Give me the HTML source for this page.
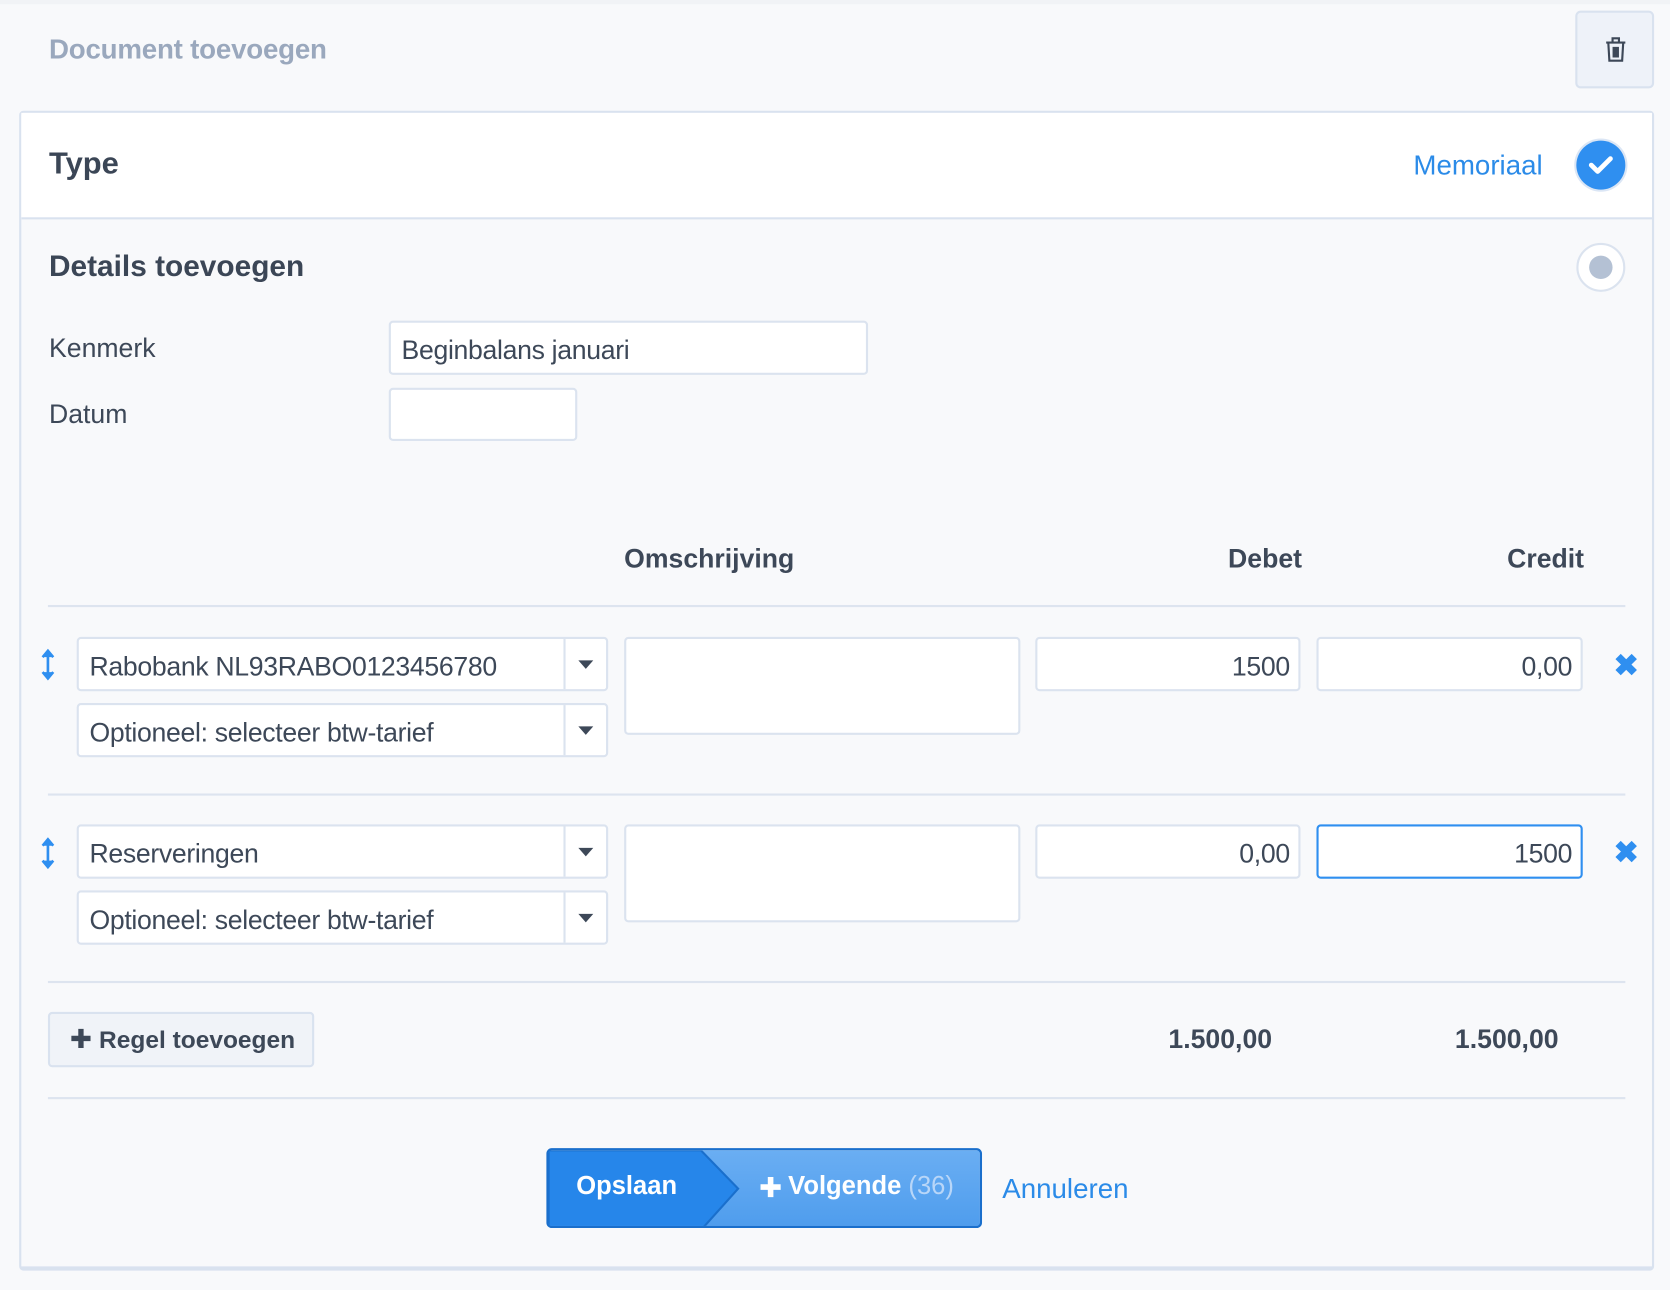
<!DOCTYPE html>
<html><head><meta charset="utf-8"><style>
html,body{margin:0;padding:0;width:1670px;height:1290px;overflow:hidden;background:#f8f9fb;}
#w{position:absolute;left:0;top:0;width:1568px;height:1211px;transform:scale(1.0651);transform-origin:0 0;font-family:"Liberation Sans",Arial,sans-serif;color:#3d4858;}
.a{position:absolute;}
.t{position:absolute;white-space:nowrap;line-height:1;}
.inp{position:absolute;background:#fff;border:2px solid #dbe3ef;border-radius:4px;box-sizing:border-box;}
.sel .dd{position:absolute;right:0;top:0;bottom:0;width:38px;border-left:2px solid #dbe3ef;}
.sel .dd:after{content:"";position:absolute;left:12px;top:20px;border-left:7px solid transparent;border-right:7px solid transparent;border-top:8px solid #3d4858;}
.sel span,.num span{position:absolute;top:12px;font-size:25px;letter-spacing:-0.3px;white-space:nowrap;}
.sel span{left:10px;}
.num span{right:8px;}
.hl{position:absolute;left:45px;width:1481px;height:2px;background:#dde4ef;}
</style></head><body><div id="w">
<div class="a" style="left:0;top:0;width:1568px;height:4px;background:#f1f3f6"></div>
<div class="t" style="left:46px;top:33px;font-size:26px;font-weight:bold;color:#9aa8bd;letter-spacing:-0.2px">Document toevoegen</div>
<div class="a" style="left:1479px;top:10px;width:74px;height:73px;box-sizing:border-box;background:#eef2f9;border:2px solid #d9e2ef;border-radius:5px">
<svg class="a" style="left:25px;top:22px" width="22" height="26" viewBox="0 0 22 26"><path d="M2 6h18M8 6V2h6v4M4 6l1 17h12l1-17M9 10v10M11 10v10M13 10v10" fill="none" stroke="#3d4858" stroke-width="2"/></svg></div>

<div class="a" style="left:18px;top:104px;width:1535px;height:1089px;box-sizing:border-box;border:2px solid #d9e2ef;border-bottom-width:4px;border-radius:4px;background:#f8f9fb"></div>
<div class="a" style="left:20px;top:106px;width:1531px;height:98px;background:#fff;border-bottom:2px solid #d9e2ef"></div>
<div class="t" style="left:46px;top:140px;font-size:29px;font-weight:bold;color:#3b4656">Type</div>
<div class="t" style="left:1327px;top:142px;font-size:26px;color:#2b8be8">Memoriaal</div>
<div class="a" style="left:1480px;top:132px;width:46px;height:46px;border-radius:50%;background:#2f8ff0;box-shadow:0 0 0 2px #dbe6f5">
<svg class="a" style="left:11px;top:13px" width="24" height="20" viewBox="0 0 24 20"><path d="M3 10l6 6L21 4" fill="none" stroke="#fff" stroke-width="4.5" stroke-linecap="round" stroke-linejoin="round"/></svg></div>

<div class="t" style="left:46px;top:236px;font-size:28px;font-weight:bold;color:#3b4656">Details toevoegen</div>
<div class="a" style="left:1480px;top:228px;width:46px;height:46px;border-radius:50%;background:#fff;box-sizing:border-box;border:2px solid #dbe3ef"><div class="a" style="left:10px;top:10px;width:22px;height:22px;border-radius:50%;background:#b4c1d4"></div></div>

<div class="t" style="left:46px;top:315px;font-size:25px">Kenmerk</div>
<div class="inp sel" style="left:365px;top:301px;width:450px;height:51px"><span>Beginbalans januari</span></div>
<div class="t" style="left:46px;top:377px;font-size:25px">Datum</div>
<div class="inp" style="left:365px;top:364px;width:177px;height:50px"></div>

<div class="t" style="left:586px;top:513px;font-size:25px;font-weight:bold">Omschrijving</div>
<div class="t" style="left:1153px;top:513px;font-size:25px;font-weight:bold">Debet</div>
<div class="t" style="left:1415px;top:513px;font-size:25px;font-weight:bold">Credit</div>
<div class="hl" style="top:568px"></div>

<!-- row 1 -->
<svg class="a" style="left:38px;top:609px" width="14" height="30" viewBox="0 0 14 30"><path d="M7 3v24M2 8l5-6 5 6M2 22l5 6 5-6" fill="#2f8ff0" stroke="#2f8ff0" stroke-width="2.5"/></svg>
<div class="inp sel" style="left:72px;top:598px;width:499px;height:51px"><span>Rabobank NL93RABO0123456780</span><div class="dd"></div></div>
<div class="inp sel" style="left:72px;top:660px;width:499px;height:51px"><span>Optioneel: selecteer btw-tarief</span><div class="dd"></div></div>
<div class="inp" style="left:586px;top:598px;width:372px;height:92px"></div>
<div class="inp num" style="left:972px;top:598px;width:249px;height:51px"><span>1500</span></div>
<div class="inp num" style="left:1236px;top:598px;width:250px;height:51px"><span>0,00</span></div>
<div class="t" style="left:1515px;top:611px;font-size:28px;font-weight:bold;color:#2f8ff0">✖</div>
<div class="hl" style="top:745px"></div>

<!-- row 2 -->
<svg class="a" style="left:38px;top:786px" width="14" height="30" viewBox="0 0 14 30"><path d="M7 3v24M2 8l5-6 5 6M2 22l5 6 5-6" fill="#2f8ff0" stroke="#2f8ff0" stroke-width="2.5"/></svg>
<div class="inp sel" style="left:72px;top:774px;width:499px;height:51px"><span>Reserveringen</span><div class="dd"></div></div>
<div class="inp sel" style="left:72px;top:836px;width:499px;height:51px"><span>Optioneel: selecteer btw-tarief</span><div class="dd"></div></div>
<div class="inp" style="left:586px;top:774px;width:372px;height:92px"></div>
<div class="inp num" style="left:972px;top:774px;width:249px;height:51px"><span>0,00</span></div>
<div class="inp num" style="left:1236px;top:774px;width:250px;height:51px;border-color:#2f8ff0"><span>1500</span></div>
<div class="t" style="left:1515px;top:787px;font-size:28px;font-weight:bold;color:#2f8ff0">✖</div>
<div class="hl" style="top:921px"></div>

<div class="a" style="left:45px;top:950px;width:250px;height:52px;box-sizing:border-box;background:#f0f3f8;border:2px solid #d9e2ef;border-radius:4px"></div>
<svg class="a" style="left:66px;top:965px" width="20" height="20" viewBox="0 0 20 20"><path d="M10 1v18M1 10h18" stroke="#3d4858" stroke-width="5"/></svg>
<div class="t" style="left:93px;top:965px;font-size:23px;font-weight:bold">Regel toevoegen</div>
<div class="t" style="left:1097px;top:964px;font-size:25px;font-weight:bold">1.500,00</div>
<div class="t" style="left:1366px;top:964px;font-size:25px;font-weight:bold">1.500,00</div>
<div class="hl" style="top:1030px"></div>

<div class="a" style="left:513px;top:1078px;width:409px;height:75px;box-sizing:border-box;border:2px solid #1a6fcc;border-radius:5px;background:linear-gradient(#6aaef3,#4f9ded);overflow:hidden">
<svg class="a" style="left:0;top:0" width="200" height="75" viewBox="0 0 200 75"><path d="M0 0H143L178 36L143 75H0Z" fill="#2686ea" stroke="#1a6fcc" stroke-width="2"/></svg>
</div>
<div class="t" style="left:541px;top:1102px;font-size:24px;font-weight:bold;color:#fff">Opslaan</div>
<svg class="a" style="left:713px;top:1104px" width="21" height="21" viewBox="0 0 20 20"><path d="M10 1v18M1 10h18" stroke="#fff" stroke-width="5"/></svg>
<div class="t" style="left:740px;top:1102px;font-size:24px;font-weight:bold;color:#fff">Volgende <span style="font-weight:normal;color:#b8d6f8">(36)</span></div>
<div class="t" style="left:941px;top:1103px;font-size:26px;color:#2b8be8">Annuleren</div>
</div></body></html>
